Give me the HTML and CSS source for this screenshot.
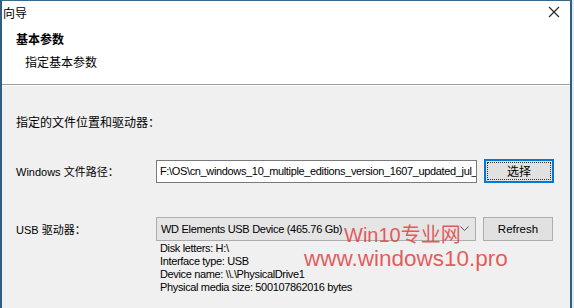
FILE: index.html
```html
<!DOCTYPE html>
<html lang="zh-CN">
<head>
    <meta charset="UTF-8">
    <title>向导</title>
    <link rel="stylesheet" href="styles.css">
</head>
<body>
    <div class="window">
        <div class="header">
            <div class="titlebar">
                <span class="title">向导</span>
                <span class="close">
                    <svg width="12" height="12" viewBox="0 0 12 12"><path d="M1 1L11 11M11 1L1 11" stroke="#222" stroke-width="1.1" fill="none"/></svg>
                </span>
            </div>
            <div class="page-title">基本参数</div>
            <div class="page-sub">指定基本参数</div>
        </div>

        <div class="content">
            <div class="intro">指定的文件位置和驱动器：</div>

            <div class="row row-path">
                <label class="label">Windows 文件路径：</label>
                <div class="input">F:\OS\cn_windows_10_multiple_editions_version_1607_updated_jul_</div>
                <button class="btn btn-focus"><span>选择</span></button>
            </div>

            <div class="row row-usb">
                <label class="label">USB 驱动器：</label>
                <div class="select">
                    <span>WD Elements USB Device (465.76 Gb)</span>
                    <svg width="9" height="6" viewBox="0 0 9 6"><path d="M0.5 0.5L4.5 4.5L8.5 0.5" stroke="#555" fill="none"/></svg>
                </div>
                <button class="btn">Refresh</button>
            </div>

            <div class="info">
                <div>Disk letters: H:\</div>
                <div>Interface type: USB</div>
                <div>Device name: \\.\PhysicalDrive1</div>
                <div>Physical media size: 500107862016 bytes</div>
            </div>

            <div class="watermark">
                <div class="wm1">Win10专业网</div>
                <div class="wm2">www.windows10.pro</div>
            </div>
        </div>
    </div>
</body>
</html>
```

FILE: styles.css
```css
body {
    margin: 0;
    background-color: #e9e9e9;
    font-family: 'Liberation Sans', 'Noto Sans CJK SC', sans-serif;
    font-size: 12px;
    color: #000;
}

.window {
    width: 568px;
    height: 307px;
    border-top: 1px solid #3a6a8a;
    border-left: 2px solid #2f5f80;
    border-right: 2px solid #2f5f80;
    background-color: #f0f0f0;
}

.header {
    background-color: #fff;
    height: 83px;
    border-bottom: 1px solid #a0a0a0;
    box-shadow: 0 1px 0 #fdfdfd;
}

.titlebar {
    display: flex;
    justify-content: space-between;
    align-items: center;
    height: 22px;
    padding: 0 10px 0 1px;
}

.title {
    font-family: 'Noto Sans CJK SC', sans-serif;
    font-size: 12px;
}

.close {
    display: flex;
    margin-top: -1px;
}

.page-title {
    font-family: 'Noto Sans CJK SC', sans-serif;
    font-weight: bold;
    font-size: 12px;
    margin: 7px 0 0 14px;
    line-height: 18px;
}

.page-sub {
    font-family: 'Noto Sans CJK SC', sans-serif;
    font-size: 12px;
    margin: 5px 0 0 23px;
    line-height: 18px;
}

.content {
    position: relative;
    padding: 0 0 0 14px;
}

.intro {
    font-family: 'Noto Sans CJK SC', sans-serif;
    padding-top: 28px;
    line-height: 18px;
}

.row {
    display: flex;
    align-items: center;
}

.row-path {
    margin-top: 28px;
}

.row-usb {
    margin-top: 34px;
}

.label {
    width: 140px;
    font-family: 'Liberation Sans', 'Noto Sans CJK SC', sans-serif;
    font-size: 11px;
}

.input {
    width: 316px;
    height: 21px;
    line-height: 21px;
    border: 1px solid #7a7a7a;
    background-color: #fff;
    padding-left: 3px;
    font-size: 11px;
    letter-spacing: -0.35px;
    white-space: nowrap;
    overflow: hidden;
}

.select {
    width: 308px;
    height: 22px;
    border: 1px solid #adadad;
    background-color: #e5e5e5;
    display: flex;
    justify-content: space-between;
    align-items: center;
    padding: 0 6px 0 4px;
    font-size: 11px;
    letter-spacing: -0.3px;
}

.btn {
    width: 70px;
    height: 24px;
    margin-left: 7px;
    border: 1px solid #adadad;
    background-color: #e1e1e1;
    font-family: 'Liberation Sans', 'Noto Sans CJK SC', sans-serif;
    font-size: 11.5px;
    padding: 0;
    color: #000;
}

.btn-focus {
    border: 2px solid #0078d7;
    padding: 1px;
}

.btn-focus span {
    display: block;
    height: 16px;
    line-height: 16px;
    border: 1px dotted #333;
    font-family: 'Noto Sans CJK SC', sans-serif;
    font-size: 12px;
}

.info {
    margin: 1px 0 0 144px;
    font-size: 11px;
    letter-spacing: -0.35px;
    line-height: 13px;
}

.watermark {
    position: absolute;
    left: 302px;
    top: 138px;
    color: rgba(226, 64, 64, 0.85);
    font-family: 'Liberation Sans', 'Noto Sans CJK SC', sans-serif;
    line-height: 24px;
}

.wm1 {
    font-size: 20px;
    margin-left: 40px;
}

.wm2 {
    font-size: 22.5px;
}
```
